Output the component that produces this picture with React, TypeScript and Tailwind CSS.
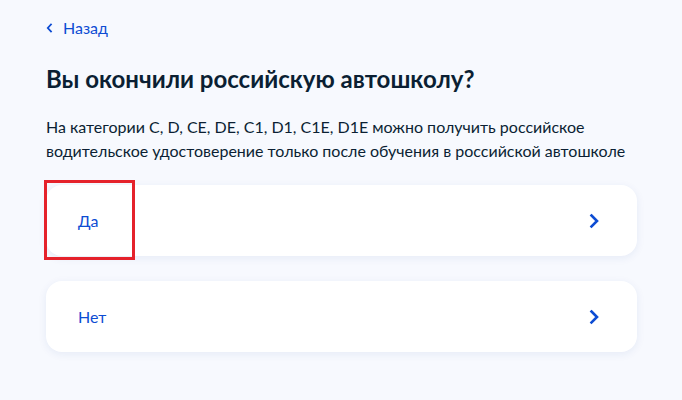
const ChevronRight = ({ className = '' }: { className?: string }) => (
  <svg viewBox="0 0 10 16" className={className} fill="none" stroke="currentColor" strokeWidth={2.6} strokeLinecap="square">
    <path d="M2.5 2.5l5.5 5.5-5.5 5.5" />
  </svg>
)

const ChevronLeft = ({ className = '' }: { className?: string }) => (
  <svg viewBox="0 0 7 10" className={className} fill="none" stroke="currentColor" strokeWidth={1.8} strokeLinecap="square">
    <path d="M5 1.5L1.8 5 5 8.5" />
  </svg>
)

const Option = ({ label }: { label: string }) => (
  <button className="flex items-center justify-between h-[71px] w-full rounded-[16px] bg-white pl-[32px] pr-[38px] text-left shadow-[0_2px_8px_rgba(30,60,150,0.08)]">
    <span className="text-[16px] text-[#0d4cd3]">{label}</span>
    <ChevronRight className="w-[10px] h-[16px] text-[#0d4cd3]" />
  </button>
)

export default function App() {
  return (
    <div className="relative w-[682px] h-[400px] bg-[#f7f9fe] font-['Lato','Noto_Sans',sans-serif] text-[#0b1f33]">
      <div className="flex flex-col pl-[46px] pr-[45px] pt-[18px]">
        <a className="flex items-center gap-[10px] text-[16px] text-[#0d4cd3] h-[20px]">
          <ChevronLeft className="w-[7px] h-[10px]" />
          <span>Назад</span>
        </a>
        <h1 className="mt-[25px] text-[24px] font-bold leading-[32px]">Вы окончили российскую автошколу?</h1>
        <p className="mt-[20px] text-[16px] leading-[24px]">
          На категории C, D, CE, DE, C1, D1, C1E, D1E можно получить российское
          <br />
          водительское удостоверение только после обучения в российской автошколе
        </p>
        <div className="mt-[22px] flex flex-col gap-[25px]">
          <Option label="Да" />
          <Option label="Нет" />
        </div>
      </div>
      <div className="absolute left-[44px] top-[180px] w-[91px] h-[80px] border-[3px] border-[#e5222b]" />
    </div>
  )
}
